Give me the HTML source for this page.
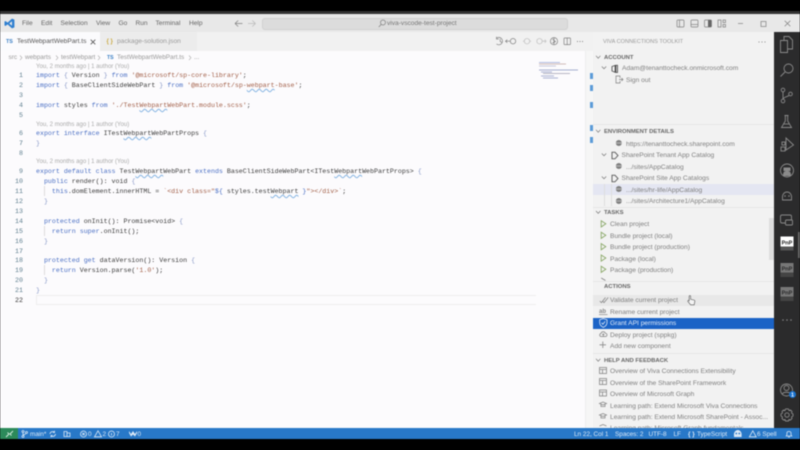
<!DOCTYPE html>
<html><head><meta charset="utf-8">
<style>
*{box-sizing:border-box}
html,body{margin:0;padding:0;width:800px;height:450px;overflow:hidden;background:#000}
#w{position:absolute;left:0;top:0;width:800px;height:450px;overflow:hidden;background:#000;filter:blur(.5px);font-family:"Liberation Sans",sans-serif}
.a{position:absolute}
.t{position:absolute;white-space:pre;line-height:10px;font-size:6.6px;color:#777}
.m{position:absolute;white-space:pre;left:36px;line-height:10px;font-family:"Liberation Mono",monospace;font-size:6.63px;color:#3b3b3b}
.n{position:absolute;white-space:pre;left:10px;width:13px;text-align:right;line-height:10px;font-family:"Liberation Mono",monospace;font-size:6.63px;color:#5f7f8f}
.b{position:absolute;left:36px;white-space:pre;line-height:10px;font-size:6.05px;color:#aaa}
.k{color:#4a6fc4}.s{color:#a3614a}.p{color:#8a9ac8}
.w{text-decoration:underline wavy #85b4e2 .5px}
.h{position:absolute;left:604px;margin-top:1px;white-space:pre;line-height:10px;font-size:5.9px;font-weight:bold;color:#666}
.s1{position:absolute;left:610px;margin-top:1px;white-space:pre;line-height:10px;font-size:6.66px;color:#808080}
svg{position:absolute;overflow:visible}
.i{fill:none;stroke:#808080;stroke-width:.7}
.st{position:absolute;top:428.5px;white-space:pre;line-height:11px;font-size:6.4px;color:#dbe8f6}
</style></head><body>
<div id="w">
<!-- chrome -->
<div class="a" style="left:0;top:11px;width:800px;height:3px;background:#333"></div>
<div class="a" style="left:0;top:14px;width:800px;height:18px;background:#e8e8e8"></div>
<div class="a" style="left:0;top:32px;width:593px;height:19px;background:#f1f1f1"></div>
<div class="a" style="left:0;top:32px;width:100px;height:19px;background:#fbfbfd"></div>
<div class="a" style="left:100px;top:32px;width:97px;height:19px;background:#ececec"></div>
<div class="a" style="left:0;top:51px;width:593px;height:377px;background:#fcfbfd"></div>
<div class="a" style="left:262px;top:17.5px;width:306px;height:12px;border-radius:3px;background:#dcdcdc;border:1px solid #d0d0d0"></div>
<!-- logo -->
<svg style="left:4px;top:18px" width="11" height="11" viewBox="0 0 11 11"><path d="M8 .6L10.4 1.6V9.4L8 10.4L3.6 6.4L1.4 8L.5 7.4V3.6L1.4 3L3.6 4.6ZM8 3.3L5.3 5.5L8 7.7Z" fill="#2f7fd0"/></svg>
<div class="t" style="left:22px;top:19px;color:#666">File</div>
<div class="t" style="left:41px;top:19px;color:#666">Edit</div>
<div class="t" style="left:60.5px;top:19px;color:#666">Selection</div>
<div class="t" style="left:96px;top:19px;color:#666">View</div>
<div class="t" style="left:118.5px;top:19px;color:#666">Go</div>
<div class="t" style="left:135.5px;top:19px;color:#666">Run</div>
<div class="t" style="left:155.5px;top:19px;color:#666">Terminal</div>
<div class="t" style="left:189px;top:19px;color:#666">Help</div>
<svg style="left:234px;top:19px" width="10" height="9"><path d="M1 4.5H8.5M1 4.5L4.2 1.5M1 4.5L4.2 7.5" class="i"/></svg>
<svg style="left:247px;top:19px" width="10" height="9"><path d="M8.5 4.5H1M8.5 4.5L5.3 1.5M8.5 4.5L5.3 7.5" fill="none" stroke="#bbb" stroke-width=".8"/></svg>
<svg style="left:378px;top:19px" width="8" height="9"><circle cx="5" cy="3.5" r="2.5" class="i"/><path d="M3.2 5.4L.8 8" class="i"/></svg>
<div class="t" style="left:387px;top:18.5px;color:#777">viva-vscode-test-project</div>
<!-- window buttons -->
<svg style="left:676px;top:19px" width="90" height="10"><g class="i"><rect x="1" y="1" width="7" height="7" rx="1"/><path d="M3.5 1V8"/><rect x="15" y="1" width="7" height="7" rx="1"/><path d="M15 5.5H22"/><rect x="28.5" y="1" width="7" height="7" rx="1"/></g><rect x="32" y="1" width="3.5" height="7" fill="#666"/><g class="i"><path d="M42 1H45V8H42ZM47 1H49.5V3.5H47ZM47 5.5H49.5V8H47Z"/><path d="M62 4.5H67"/><rect x="85" y="2.5" width="5" height="5"/></g></svg>
<svg style="left:784px;top:20px" width="7" height="7"><path d="M.7.7L6.3 6.3M6.3.7L.7 6.3" class="i"/></svg>
<!-- tabs -->
<div class="t" style="left:6px;top:36.5px;font-size:5.4px;font-weight:bold;color:#3b7fc4">TS</div>
<div class="t" style="left:17px;top:37px;color:#555">TestWebpartWebPart.ts</div>
<svg style="left:90px;top:39px" width="6" height="6"><path d="M.7.7L5.3 5.3M5.3.7L.7 5.3" stroke="#555" stroke-width=".8"/></svg>
<div class="t" style="left:106.5px;top:37px;font-size:6px;color:#c9a83f;font-weight:bold">{ }</div>
<div class="t" style="left:117px;top:37px;color:#999">package-solution.json</div>
<!-- editor toolbar -->
<svg style="left:495px;top:36px" width="95" height="11"><g class="i"><path d="M1.5 2.2A3.7 3.7 0 1 1 1.5 8M1.5 .8V3H3.7M5.2 3V5.4L6.8 6.4"/><circle cx="18" cy="5.2" r="2.7"/><path d="M15 5.2H10.5M12.3 3.6L10.5 5.2L12.3 6.8"/></g><g fill="none" stroke="#c4c4c4" stroke-width=".8"><circle cx="32" cy="5.2" r="2.7"/><path d="M29 5.2H28M35 5.2H36"/><circle cx="44.5" cy="5.2" r="2.7"/><path d="M47.5 5.2H51M49.8 3.6L51 5.2L49.8 6.8"/></g><g class="i"><circle cx="59" cy="5.2" r="3.6"/><path d="M59 1.6V8.8M57.5 3.2L60.5 5.5L57.5 7"/><rect x="69" y="2" width="6.5" height="6.6" rx=".6"/><path d="M72.2 2V8.6"/></g><g fill="#666"><circle cx="82.5" cy="5.5" r=".5"/><circle cx="85" cy="5.5" r=".5"/><circle cx="87.5" cy="5.5" r=".5"/></g></svg>
<!-- breadcrumb -->
<div class="t" style="left:8.5px;top:52.5px;font-size:6.4px;color:#999">src</div>
<div class="t" style="left:25px;top:52.5px;font-size:6.4px;color:#999">webparts</div>
<div class="t" style="left:61px;top:52.5px;font-size:6.4px;color:#999">testWebpart</div>
<div class="t" style="left:107px;top:52.5px;font-size:5.2px;font-weight:bold;color:#3b7fc4">TS</div>
<div class="t" style="left:117px;top:52.5px;font-size:6.4px;color:#999">TestWebpartWebPart.ts</div>
<div class="t" style="left:194px;top:52.5px;font-size:6.4px;color:#999">...</div>
<svg style="left:19px;top:54.5px" width="180" height="6"><path d="M1 .5L3 2.8L1 5M37 .5L39 2.8L37 5M79 .5L81 2.8L79 5M170 .5L172 2.8L170 5" fill="none" stroke="#aaa" stroke-width=".6"/></svg>
<!-- code -->
<div class="b" style="top:61.5px">You, 2 months ago | 1 author (You)</div>
<div class="n" style="top:70px">1</div><div class="m" style="top:70px"><span class="k">import</span> <span class="p">{</span> Version <span class="p">}</span> <span class="k">from</span> <span class="s">'@microsoft/sp-core-library'</span>;</div>
<div class="n" style="top:80px">2</div><div class="m" style="top:80px"><span class="k">import</span> <span class="p">{</span> BaseClientSideWebPart <span class="p">}</span> <span class="k">from</span> <span class="s">'@microsoft/sp-<span class="w">webpart</span>-base'</span>;</div>
<div class="n" style="top:90px">3</div>
<div class="n" style="top:100px">4</div><div class="m" style="top:100px"><span class="k">import</span> styles <span class="k">from</span> <span class="s">'./Test<span class="w">Webpart</span>WebPart.module.scss'</span>;</div>
<div class="n" style="top:110px">5</div>
<div class="b" style="top:119.5px">You, 2 months ago | 1 author (You)</div>
<div class="n" style="top:128px">6</div><div class="m" style="top:128px"><span class="k">export interface</span> ITest<span class="w">Webpart</span>WebPartProps <span class="p">{</span></div>
<div class="n" style="top:138px">7</div><div class="m" style="top:138px"><span class="p">}</span></div>
<div class="n" style="top:148px">8</div>
<div class="b" style="top:157px">You, 2 months ago | 1 author (You)</div>
<div class="n" style="top:166px">9</div><div class="m" style="top:166px"><span class="k">export default class</span> Test<span class="w">Webpart</span>WebPart <span class="k">extends</span> BaseClientSideWebPart&lt;ITest<span class="w">Webpart</span>WebPartProps&gt; <span class="p">{</span></div>
<div class="n" style="top:176px">10</div><div class="m" style="top:176px">  <span class="k">public</span> render(): void <span class="p">{</span></div>
<div class="n" style="top:186px">11</div><div class="m" style="top:186px">    <span class="k">this</span>.domElement.innerHTML = <span class="s">`&lt;div class="</span><span class="k">${</span> styles.test<span class="w">Webpart</span> <span class="k">}</span><span class="s">"&gt;&lt;/div&gt;`</span>;</div>
<div class="n" style="top:196px">12</div><div class="m" style="top:196px">  <span class="p">}</span></div>
<div class="n" style="top:206px">13</div>
<div class="n" style="top:215.5px">14</div><div class="m" style="top:215.5px">  <span class="k">protected</span> onInit(): Promise&lt;void&gt; <span class="p">{</span></div>
<div class="n" style="top:225.5px">15</div><div class="m" style="top:225.5px">    <span class="k">return super</span>.onInit();</div>
<div class="n" style="top:235.5px">16</div><div class="m" style="top:235.5px">  <span class="p">}</span></div>
<div class="n" style="top:245.5px">17</div>
<div class="n" style="top:255px">18</div><div class="m" style="top:255px">  <span class="k">protected get</span> dataVersion(): Version <span class="p">{</span></div>
<div class="n" style="top:265px">19</div><div class="m" style="top:265px">    <span class="k">return</span> Version.parse(<span class="s">'1.0'</span>);</div>
<div class="n" style="top:275px">20</div><div class="m" style="top:275px">  <span class="p">}</span></div>
<div class="n" style="top:285px">21</div><div class="m" style="top:285px"><span class="p">}</span></div>
<div class="n" style="top:295px;color:#333">22</div>
<div class="a" style="left:36px;top:295px;width:500px;height:10px;border:1px solid #eee;border-right:0"></div>
<div class="a" style="left:44px;top:186px;width:1px;height:10px;background:#ddd"></div>
<div class="a" style="left:44px;top:225.5px;width:1px;height:10px;background:#ddd"></div>
<div class="a" style="left:44px;top:265px;width:1px;height:10px;background:#ddd"></div>
<!-- minimap -->
<svg style="left:538px;top:61px" width="45" height="20"><g stroke-width=".7" fill="none"><path d="M1 1.5H22" stroke="#9aa8d8"/><path d="M1 3H28" stroke="#c4a8a0"/><path d="M1 5H18" stroke="#b8b8d0"/><path d="M1 9H40" stroke="#8a94c0"/><path d="M3 11H14" stroke="#8a94c0"/><path d="M5 12.5H32" stroke="#a0a0b0"/><path d="M3 15H16" stroke="#8a94c0"/><path d="M5 17H20" stroke="#8a94c0"/></g></svg>
<div class="a" style="left:585px;top:51px;width:8px;height:377px;background:#f6f6f6;border-left:1px solid #eee"></div>
<div class="a" style="left:590px;top:73px;width:2.5px;height:6px;background:#5b9bd8"></div>
<div class="a" style="left:590px;top:85px;width:2.5px;height:6px;background:#5b9bd8"></div>
<div class="a" style="left:590px;top:102px;width:2.5px;height:6px;background:#5b9bd8"></div>
<div class="a" style="left:590px;top:125px;width:2.5px;height:6px;background:#5b9bd8"></div>
<div class="a" style="left:590px;top:137px;width:2.5px;height:6px;background:#5b9bd8"></div>
<!-- sidebar -->
<div class="a" style="left:593px;top:32px;width:181px;height:396px;background:#f2f2f2"></div>
<div class="t" style="left:603px;top:37px;font-size:5.6px;color:#999">VIVA CONNECTIONS TOOLKIT</div>
<svg style="left:758px;top:41px" width="9" height="2"><g fill="#777"><circle cx="1" cy="1" r=".55"/><circle cx="4" cy="1" r=".55"/><circle cx="7" cy="1" r=".55"/></g></svg>
<svg style="left:595px;top:54px" width="8" height="380"><path d="M1 1.8L3.2 4.2L5.4 1.8M1 75.8L3.2 78.2L5.4 75.8M1 157L3.2 159.4L5.4 157M1 230.8L3.2 233.2L5.4 230.8M1 304.8L3.2 307.2L5.4 304.8" fill="none" stroke="#777" stroke-width=".7"/></svg>
<div class="a" style="left:593px;top:124px;width:181px;height:1px;background:#e6e6e6"></div>
<div class="a" style="left:593px;top:207px;width:181px;height:1px;background:#e6e6e6"></div>
<div class="a" style="left:593px;top:281px;width:181px;height:1px;background:#e6e6e6"></div>
<div class="a" style="left:593px;top:353px;width:181px;height:1px;background:#e6e6e6"></div>
<div class="h" style="top:52px">ACCOUNT</div>
<div class="s1" style="left:622px;top:63px">Adam@tenanttocheck.onmicrosoft.com</div>
<svg style="left:601px;top:65px" width="24" height="8"><path d="M.8 1.5L3 3.8L5.2 1.5" fill="none" stroke="#777" stroke-width=".7"/><path d="M11 1.5L14.5.3H16.5V7.4H14.5L11 6Z" fill="none" stroke="#555" stroke-width=".9"/><path d="M14.5.3V7.4" stroke="#444" stroke-width="1.6"/></svg>
<svg style="left:615px;top:75px" width="9" height="9"><path d="M5 3V1H1V8H5V6M4 4.5H8M6.5 3L8 4.5L6.5 6" class="i"/></svg>
<div class="s1" style="left:626px;top:75px">Sign out</div>
<div class="h" style="top:126px">ENVIRONMENT DETAILS</div>
<div class="a" style="left:593px;top:183.5px;width:181px;height:11.5px;background:#e4e6f2"></div>
<svg style="left:615px;top:139px" width="8" height="70"><g><circle cx="3.8" cy="4" r="3" fill="#808080"/><circle cx="3.8" cy="27" r="3" fill="#808080"/><circle cx="3.8" cy="50" r="3" fill="#808080"/><circle cx="3.8" cy="62" r="3" fill="#808080"/><path d="M.5 4H7M.5 27H7M.5 50H7M.5 62H7" stroke="#f2f2f2" stroke-width=".5"/></g></svg>
<div class="s1" style="left:626px;top:138.5px">https://tenanttocheck.sharepoint.com</div>
<svg style="left:601px;top:152px" width="20" height="30"><path d="M.8 1.5L3 3.8L5.2 1.5M.8 24.5L3 26.8L5.2 24.5" fill="none" stroke="#777" stroke-width=".7"/><path d="M11 .3H14L17 3.5L14 6.8H11ZM11 23.3H14L17 26.5L14 29.8H11Z" fill="none" stroke="#666" stroke-width="1"/></svg>
<div class="s1" style="left:621.5px;top:150px">SharePoint Tenant App Catalog</div>
<div class="s1" style="left:626px;top:161.5px">.../sites/AppCatalog</div>
<div class="s1" style="left:621.5px;top:173px">SharePoint Site App Catalogs</div>
<div class="s1" style="left:626px;top:184.5px">.../sites/hr-life/AppCatalog</div>
<div class="s1" style="left:626px;top:196px">.../sites/Architecture1/AppCatalog</div>
<div class="a" style="left:604px;top:184px;width:1px;height:22px;background:#ddd"></div>
<div class="a" style="left:611px;top:184px;width:1px;height:22px;background:#ddd"></div>
<div class="h" style="top:207px">TASKS</div>
<svg style="left:600px;top:220px" width="8" height="66"><g fill="none" stroke="#8aa868" stroke-width=".9"><path d="M1.2 .8L5.8 3.8L1.2 7ZM1.2 12.2L5.8 15.2L1.2 18.4ZM1.2 23.6L5.8 26.6L1.2 29.8ZM1.2 35L5.8 38L1.2 41.2ZM1.2 46.2L5.8 49.2L1.2 52.4Z"/></g><path d="M1.2 58L5.5 60.5" stroke="#8a8a8a" stroke-width="1"/></svg>
<div class="s1" style="top:219px">Clean project</div>
<div class="s1" style="top:230.5px">Bundle project (local)</div>
<div class="s1" style="top:242px">Bundle project (production)</div>
<div class="s1" style="top:253.5px">Package (local)</div>
<div class="s1" style="top:264.5px">Package (production)</div>
<div class="a" style="left:769px;top:218px;width:5px;height:42px;background:#dedede"></div>
<div class="a" style="left:593px;top:281px;width:181px;height:11px;background:#f2f2f2;border-top:1px solid #e6e6e6"></div>
<div class="h" style="top:281px">ACTIONS</div>
<div class="a" style="left:593px;top:294.5px;width:181px;height:11.5px;background:#e8e8e8"></div>
<svg style="left:599px;top:296px" width="10" height="8"><path d="M.8 5L2.4 6.6L6.5 1.5M3.5 5L5 6.6L9.2 1.5" fill="none" stroke="#888" stroke-width=".8"/></svg>
<div class="s1" style="top:295px">Validate current project</div>
<svg style="left:687px;top:295px" width="9" height="11"><path d="M2.2 1.2C2.2.3 3.6.3 3.6 1.2V4.3L6.8 5C7.6 5.2 8 5.8 7.8 6.5L7.2 9.8H3.6L.9 6.5C.4 5.8 1.3 5 2 5.5L2.2 5.8Z" fill="#f4f4f4" stroke="#555" stroke-width=".6"/></svg>
<svg style="left:599px;top:307px" width="10" height="9"><text x="0" y="6" font-family="Liberation Sans" font-size="6" font-weight="bold" fill="#888">ab</text><path d="M0 7.6H8.5" stroke="#888" stroke-width=".7"/></svg>
<div class="s1" style="top:306.5px">Rename current project</div>
<div class="a" style="left:593px;top:317.5px;width:181px;height:11.5px;background:#1b63c6"></div>
<svg style="left:599px;top:318px" width="9" height="10"><path d="M4.3.6L8 1.8V4.8C8 7 6 8.6 4.3 9.4C2.6 8.6.7 7 .7 4.8V1.8ZM2.6 4.8L3.9 6.2L6.1 3.4" fill="none" stroke="#dfe9f8" stroke-width=".8"/></svg>
<div class="s1" style="top:318px;color:#e3ecf9">Grant API permissions</div>
<svg style="left:599px;top:330px" width="9" height="8"><path d="M2.2 6.5C.2 6.5.2 3.8 2 3.5C2.5 1.2 5.8 1.2 6.4 3.3C8.5 3.3 8.5 6.5 6.5 6.5H2.2ZM4.3 6.5V3.8M3.2 4.8L4.3 3.8L5.4 4.8" class="i"/></svg>
<div class="s1" style="top:329.5px">Deploy project (sppkg)</div>
<svg style="left:599px;top:341px" width="8" height="8"><path d="M3.8.5V7M.5 3.8H7" stroke="#888" stroke-width=".8"/></svg>
<div class="s1" style="top:341px">Add new component</div>
<div class="h" style="top:355px">HELP AND FEEDBACK</div>
<svg style="left:599px;top:367px" width="9" height="60"><g fill="none" stroke="#888" stroke-width=".8"><rect x=".5" y=".5" width="7" height="6"/><path d="M.5 2.5H7.5M3.5 2.5V6.5"/><rect x=".5" y="11.5" width="7" height="6"/><path d="M.5 13.5H7.5M3.5 13.5V17.5"/><rect x=".5" y="23" width="7" height="6"/><path d="M.5 25H7.5M3.5 25V29"/><path d="M.5 36.5L4 35L7.5 36.5L4 38ZM2 37.5V39.5H6V37.5M.5 48L4 46.5L7.5 48L4 49.5ZM2 49V51H6V49M.5 59L4 57.500L7.5 59"/></g></svg>
<div class="s1" style="top:366px">Overview of Viva Connections Extensibility</div>
<div class="s1" style="top:377.5px">Overview of the SharePoint Framework</div>
<div class="s1" style="top:389px">Overview of Microsoft Graph</div>
<div class="s1" style="top:400.5px">Learning path: Extend Microsoft Viva Connections</div>
<div class="s1" style="top:412px">Learning path: Extend Microsoft SharePoint - Assoc...</div>
<div class="a" style="left:593px;top:424px;width:181px;height:4px;overflow:hidden"><div class="s1" style="left:17px;top:-1px">Learning path: Microsoft Graph fundamentals</div></div>
<!-- activity bar -->
<div class="a" style="left:774px;top:32px;width:26px;height:396px;background:#2b2b2c"></div>
<svg style="left:774px;top:32px" width="26" height="396"><g fill="none" stroke="#8a8a8a" stroke-width=".9">
<path d="M10 8.5V4.5H15L18.5 8V17H13.5M6.5 8.5H13.5V20.5H6.5Z"/>
<circle cx="14.5" cy="36.5" r="4.5"/><path d="M11 40L6.5 44.5"/>
<circle cx="9" cy="58" r="1.8"/><circle cx="9" cy="69" r="1.8"/><circle cx="16.5" cy="62" r="1.8"/><path d="M9 60V67M15 63.5C13 65 10.5 64.5 9 67"/>
<path d="M10.5 83.5H14.5M11.3 83.5V89L7.5 95.5H17.5L13.7 89V83.5"/><path d="M9.5 92H15.5"/>
<path d="M12 106L19.5 113L12 118Z"/><rect x="7" y="115" width="4" height="4"/><rect x="8" y="110" width="3" height="3"/>
<circle cx="13" cy="138.5" r="6.5"/>
<path d="M8.5 166C8 163 10 160 13 160C16 160 18 163 17.5 166V168H8.5Z"/>
<rect x="6.5" y="183" width="11" height="8" rx="1.5"/><rect x="11.5" y="188" width="7" height="5" rx="1" fill="#2b2b2c"/>
</g>
<path d="M9 144C9 140 10 139 13 139C16 139 17 140 17 144ZM9.5 135.5H16.5V139H9.5Z" fill="#8a8a8a"/>
<g fill="#8a8a8a"><circle cx="11" cy="164" r=".8"/><circle cx="15" cy="164" r=".8"/></g>
<rect x="6.5" y="204.5" width="13" height="14" fill="#fff"/><rect x="6.5" y="214.5" width="13" height="4" fill="#555"/>
<text x="13" y="212.5" text-anchor="middle" font-family="Liberation Sans" font-size="5.5" font-weight="bold" fill="#222">PnP</text>
<rect x="6.5" y="231" width="13" height="14" fill="#777"/><rect x="6.5" y="240.5" width="13" height="4.5" fill="#444"/>
<text x="13" y="238.5" text-anchor="middle" font-family="Liberation Sans" font-size="5.5" font-weight="bold" fill="#2b2b2c">PnP</text>
<rect x="6.5" y="255" width="13" height="14" fill="#777"/><rect x="6.5" y="264.5" width="13" height="4.5" fill="#444"/>
<text x="13" y="262.5" text-anchor="middle" font-family="Liberation Sans" font-size="5.5" font-weight="bold" fill="#2b2b2c">PnP</text>
<g fill="#888"><circle cx="9" cy="288" r=".8"/><circle cx="13" cy="288" r=".8"/><circle cx="17" cy="288" r=".8"/></g>
<g fill="none" stroke="#8a8a8a" stroke-width=".9"><circle cx="12.5" cy="358" r="6"/><circle cx="12.5" cy="356" r="2.5"/><path d="M8 362.5C9 359.5 16 359.5 17 362.5"/>
<circle cx="13" cy="383" r="2.2"/><path d="M13 376.8L14.5 377L15 378.5L16.5 378L18 379.5L17.5 381L19 382V384L17.5 385L18 386.5L16.5 388L15 387.5L14.5 389H11.5L11 387.5L9.5 388L8 386.5L8.5 385L7 384V382L8.5 381L8 379.5L9.5 378L11 378.5L11.5 377Z"/></g>
<circle cx="18.5" cy="362.5" r="3.5" fill="#1a73d0"/><text x="18.5" y="364.5" text-anchor="middle" font-family="Liberation Sans" font-size="5" font-weight="bold" fill="#fff">1</text>
</svg>
<div class="a" style="left:798px;top:232px;width:2px;height:26px;background:#666"></div>
<!-- status bar -->
<div class="a" style="left:0;top:428px;width:799.5px;height:11px;background:#2878c8"></div>
<div class="a" style="left:0;top:428px;width:18px;height:11px;background:#2c8a5a"></div>
<svg style="left:5px;top:429.5px" width="9" height="8"><path d="M1 7L4 4L2.5 2.5M8 1L5 4L6.5 5.5" fill="none" stroke="#d8eee0" stroke-width=".9"/></svg>
<svg style="left:21px;top:429.5px" width="130" height="8"><g fill="none" stroke="#dbe8f6" stroke-width=".8"><circle cx="2" cy="1.5" r="1"/><circle cx="2" cy="6.5" r="1"/><circle cx="5.5" cy="2.5" r="1"/><path d="M2 2.5V5.5M5 3.5C4 4.5 3 4.5 2 5.5"/><path d="M29 4A2.7 2.7 0 0 1 33.5 2.2M34.5 4A2.7 2.7 0 0 1 30 5.8M33.5 .8V2.5H31.8M30 7.2V5.5H31.7"/><path d="M43 1.5H46V6.5H43ZM46 3H49V6.5H46Z"/><circle cx="62.5" cy="4" r="3"/><path d="M61.3 2.8L63.7 5.2M63.7 2.8L61.3 5.2"/><path d="M77 .8L80.5 6.8H73.5Z"/><circle cx="90.5" cy="4" r="3"/><path d="M90.5 3V5.5"/></g><path d="M108 1L110 4L112 1L114 4L116 1V3L114 6.5L112 4.5L110 6.5L108 3Z" fill="#dbe8f6"/></svg>
<div class="st" style="left:30px">main*</div>
<div class="st" style="left:88px">0</div>
<div class="st" style="left:102.5px">2</div>
<div class="st" style="left:116px">7</div>
<div class="st" style="left:137.5px">0</div>
<div class="st" style="left:574px">Ln 22, Col 1</div>
<div class="st" style="left:615px">Spaces: 2</div>
<div class="st" style="left:648.5px">UTF-8</div>
<div class="st" style="left:673.5px">LF</div>
<div class="st" style="left:688px;font-weight:bold">{ }</div>
<div class="st" style="left:697px">TypeScript</div>
<svg style="left:733px;top:429px" width="10" height="9"><path d="M1 6.5C.5 3.5 2.5 1 4.8 1C7.2 1 9 3.5 8.6 6.5V8H1Z" fill="#dbe8f6"/><g fill="#2878c8"><circle cx="3.3" cy="4.5" r=".9"/><circle cx="6.3" cy="4.5" r=".9"/></g></svg>
<svg style="left:749px;top:429.5px" width="8" height="8"><path d="M3.8.8L7.2 6.8H.4Z" fill="none" stroke="#dbe8f6" stroke-width=".8"/></svg>
<div class="st" style="left:757px">6 Spell</div>
<svg style="left:784.5px;top:429.5px" width="8" height="8"><path d="M1.2 6H6.8L6 4.8V3C6 1 1.9 1 1.9 3V4.8ZM3 7H5" fill="none" stroke="#dbe8f6" stroke-width=".8"/></svg>
</div>
</body></html>
